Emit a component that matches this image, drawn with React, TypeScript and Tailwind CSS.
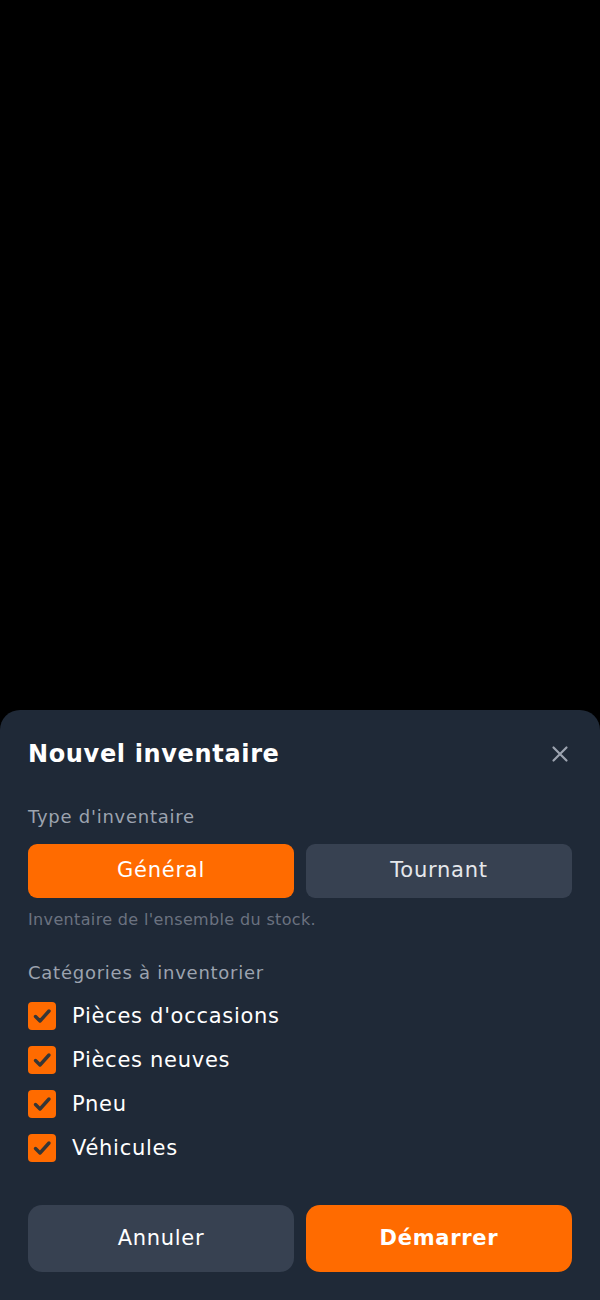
import { useState } from "react";

const CATEGORIES = ["Pièces d'occasions", "Pièces neuves", "Pneu", "Véhicules"];

type InventoryType = "general" | "tournant";

function CheckMark() {
  return (
    <svg viewBox="0 0 28 28" width={28} height={28} aria-hidden>
      <path
        d="M7.5 14.5l4.5 4.5 9-10"
        fill="none"
        stroke="#363636"
        strokeWidth={3.4}
        strokeLinecap="round"
        strokeLinejoin="round"
      />
    </svg>
  );
}

function CategoryRow({
  label,
  checked,
  onToggle,
}: {
  readonly label: string;
  readonly checked: boolean;
  readonly onToggle: () => void;
}) {
  return (
    <label className="flex cursor-pointer items-center gap-4">
      <input type="checkbox" className="sr-only" checked={checked} onChange={onToggle} />
      <span
        className={
          checked
            ? "flex h-7 w-7 shrink-0 items-center justify-center rounded-[4px] bg-[#ff6b00]"
            : "flex h-7 w-7 shrink-0 items-center justify-center rounded-[4px] border-2 border-[#6b7280]"
        }
      >
        {checked ? <CheckMark /> : null}
      </span>
      <span className="text-[21px] leading-7 tracking-[0.72px] text-white">{label}</span>
    </label>
  );
}

export default function App() {
  const [type, setType] = useState<InventoryType>("general");
  const [selected, setSelected] = useState<string[]>(CATEGORIES);

  const toggle = (cat: string) => {
    setSelected((prev) => (prev.includes(cat) ? prev.filter((c) => c !== cat) : [...prev, cat]));
  };

  return (
    <div className="flex min-h-screen flex-col justify-end bg-black font-['DejaVu_Sans',sans-serif]">
      <div className="flex flex-col rounded-t-[20px] bg-[#1f2937] px-7 pb-7 pt-7">
        <div className="flex items-center justify-between">
          <h2 className="text-[24px] font-bold leading-8 tracking-[0.65px] text-white">Nouvel inventaire</h2>
          <button type="button" aria-label="Fermer" className="mr-[3px] text-[#9ca3af]">
            <svg viewBox="0 0 18 18" width={18} height={18} aria-hidden>
              <path d="M2.5 2.5l13 13M15.5 2.5l-13 13" stroke="currentColor" strokeWidth={2.2} strokeLinecap="round" />
            </svg>
          </button>
        </div>

        <p className="mt-[33px] text-[18px] leading-7 tracking-[0.75px] text-[#9ca3af]">Type d&apos;inventaire</p>
        <div className="mt-[13px] grid grid-cols-2 gap-3">
          <button
            type="button"
            onClick={() => setType("general")}
            className={
              type === "general"
                ? "h-[54px] rounded-[9px] bg-[#ff6b00] text-[21px] tracking-[0.75px] text-white"
                : "h-[54px] rounded-[9px] bg-[#374151] text-[21px] tracking-[0.75px] text-[#e5e7eb]"
            }
          >
            Général
          </button>
          <button
            type="button"
            onClick={() => setType("tournant")}
            className={
              type === "tournant"
                ? "h-[54px] rounded-[9px] bg-[#ff6b00] text-[21px] tracking-[0.75px] text-white"
                : "h-[54px] rounded-[9px] bg-[#374151] text-[21px] tracking-[0.75px] text-[#e5e7eb]"
            }
          >
            Tournant
          </button>
        </div>
        <p className="mt-3 text-[16px] leading-5 tracking-[0.35px] text-[#6b7280]">
          {type === "general" ? "Inventaire de l'ensemble du stock." : "Inventaire d'une partie du stock."}
        </p>

        <p className="mt-[29px] text-[18px] leading-7 tracking-[0.75px] text-[#9ca3af]">Catégories à inventorier</p>
        <div className="mt-[15px] flex flex-col gap-4">
          {CATEGORIES.map((cat) => (
            <CategoryRow
              key={cat}
              label={cat}
              checked={selected.includes(cat)}
              onToggle={() => toggle(cat)}
            />
          ))}
        </div>

        <div className="mt-[43px] grid grid-cols-2 gap-3">
          <button type="button" className="h-[67px] rounded-[14px] bg-[#374151] text-[21px] tracking-[0.72px] text-white">
            Annuler
          </button>
          <button
            type="button"
            className="h-[67px] rounded-[14px] bg-[#ff6b00] text-[21px] font-bold tracking-[0.72px] text-white"
          >
            Démarrer
          </button>
        </div>
      </div>
    </div>
  );
}
